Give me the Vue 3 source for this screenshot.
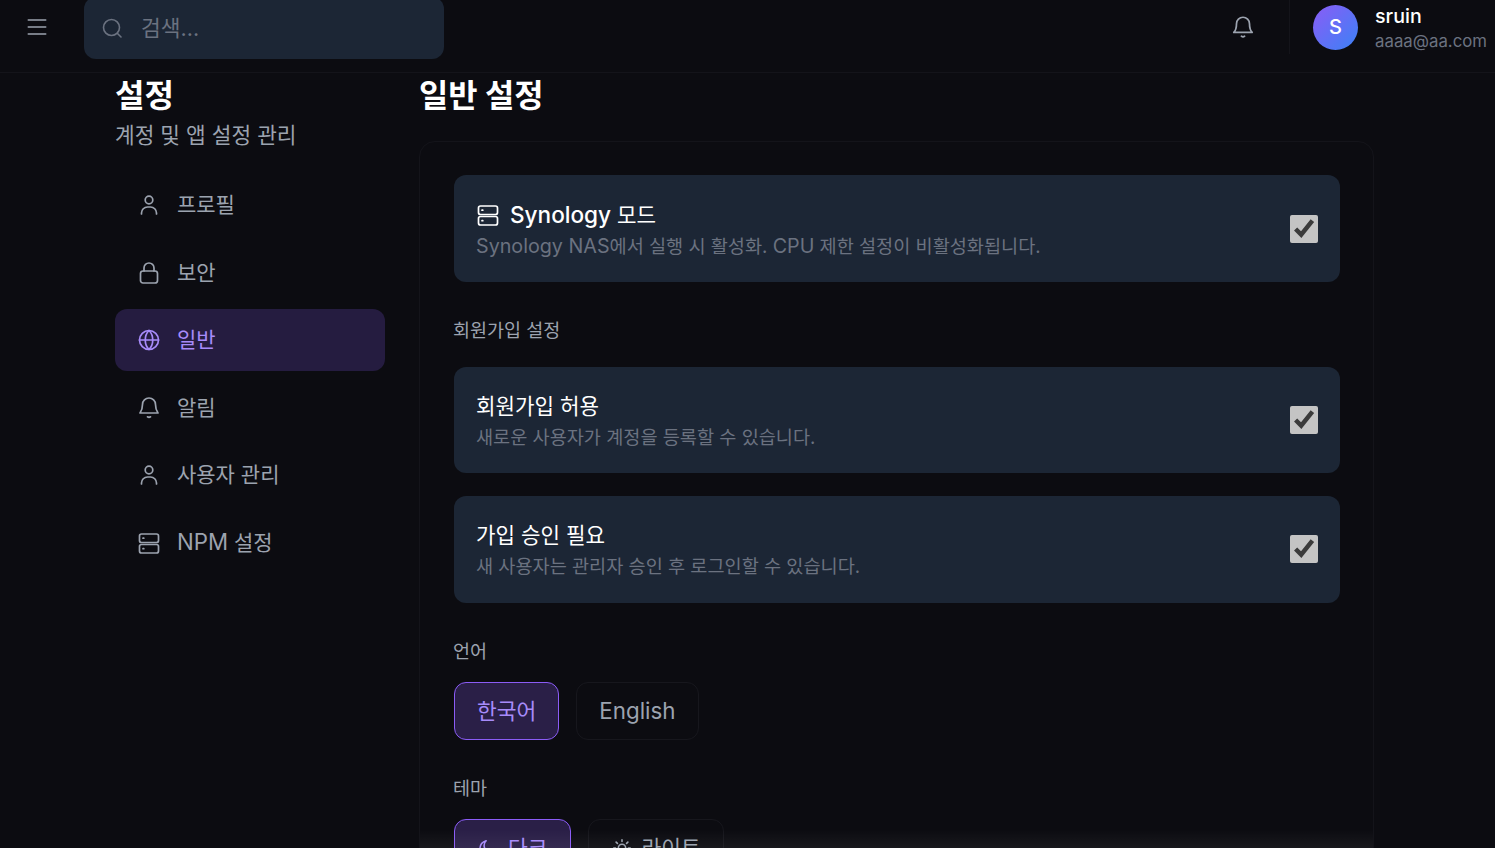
<script setup>
const navItems = [
  { label: '프로필', icon: 'user' },
  { label: '보안', icon: 'lock' },
  { label: '일반', icon: 'globe', active: true },
  { label: '알림', icon: 'bell' },
  { label: '사용자 관리', icon: 'user' },
  { label: '설정', latin: 'NPM', icon: 'server' }
]

const signupRows = [
  { title: '회원가입 허용', desc: '새로운 사용자가 계정을 등록할 수 있습니다.' },
  { title: '가입 승인 필요', desc: '새 사용자는 관리자 승인 후 로그인할 수 있습니다.' }
]
</script>

<template>
  <div class="page">
    <header class="topbar">
      <button class="menu-btn" aria-label="menu">
        <svg width="24" height="24" viewBox="0 0 24 24" fill="none" stroke="currentColor" stroke-width="1.6" stroke-linecap="round"><path d="M3.3 6h17.400M3.3 13h17.400M3.3 20h17.400" /></svg>
      </button>
      <div class="search">
        <svg width="24" height="24" viewBox="0 0 24 24" fill="none" stroke="currentColor" stroke-width="1.6" stroke-linecap="round"><circle cx="11.500" cy="11.500" r="8" /><path d="m17.500 17.500 3.500 3.500" /></svg>
        <span>검색...</span>
      </div>
      <div class="spacer"></div>
      <svg class="top-bell" width="26" height="26" viewBox="0 0 24 24" fill="none" stroke="currentColor" stroke-width="1.6" stroke-linecap="round" stroke-linejoin="round"><path d="M6 9a6 6 0 0 1 12 0c0 5 1.500 7 2.500 8h-17C4.500 16 6 14 6 9Z" /><path d="M10.500 20.500c.8.700 2.200.700 3 0" /></svg>
      <div class="user">
        <div class="avatar">S</div>
        <div class="user-text">
          <div class="user-name">sruin</div>
          <div class="user-mail">aaaa@aa.com</div>
        </div>
      </div>
    </header>

    <div class="content">
      <aside class="sidebar">
        <h1>설정</h1>
        <p class="sub">계정 및 앱 설정 관리</p>
        <nav>
          <a v-for="item in navItems" :key="item.label" class="nav-item" :class="{ active: item.active }">
            <svg width="24" height="24" viewBox="0 0 24 24" fill="none" stroke="currentColor" stroke-width="1.7" stroke-linecap="round" stroke-linejoin="round">
              <template v-if="item.icon === 'user'">
                <circle cx="12" cy="7" r="3.800" /><path d="M4.500 21v-1a6 6 0 0 1 6-6h3a6 6 0 0 1 6 6v1" />
              </template>
              <template v-else-if="item.icon === 'lock'">
                <rect x="3.500" y="10" width="17" height="12" rx="2.500" /><path d="M7 10V7a5 5 0 0 1 10 0v3" />
              </template>
              <template v-else-if="item.icon === 'globe'">
                <circle cx="12" cy="12" r="9.500" /><path d="M2.500 12h19M12 2.500c5 5 5 14 0 19M12 2.500c-5 5-5 14 0 19" />
              </template>
              <template v-else-if="item.icon === 'bell'">
                <path d="M5.500 8.500a6.500 6.500 0 0 1 13 0c0 5 1.500 7 2.500 8.500H3c1-1.500 2.500-3.500 2.500-8.500Z" /><path d="M10.500 20.800c.8.600 2.200.600 3 0" />
              </template>
              <template v-else>
                <rect x="2.500" y="3" width="19" height="8.500" rx="2" /><rect x="2.500" y="13.500" width="19" height="8.500" rx="2" /><path d="M6 7.200h.8M6 17.700h.8" />
              </template>
            </svg>
            <span class="nav-label"><template v-if="item.latin"><span class="lat">{{ item.latin }}</span>&nbsp;</template>{{ item.label }}</span>
          </a>
        </nav>
      </aside>

      <main class="main">
        <h2>일반 설정</h2>
        <section class="card">
          <div class="row first">
            <div class="row-text">
              <div class="row-title">
                <svg width="24" height="24" viewBox="0 0 24 24" fill="none" stroke="currentColor" stroke-width="1.7" stroke-linecap="round" stroke-linejoin="round"><rect x="2.500" y="3" width="19" height="8.500" rx="2" /><rect x="2.500" y="13.500" width="19" height="8.500" rx="2" /><path d="M6 7.200h.8M6 17.700h.8" /></svg>
                <span><span class="lat strong">Synology</span> 모드</span>
              </div>
              <div class="row-desc"><span class="lat">Synology NAS</span>에서 실행 시 활성화. <span class="lat">CPU</span> 제한 설정이 비활성화됩니다.</div>
            </div>
            <input type="checkbox" checked />
          </div>

          <div class="group-label">회원가입 설정</div>
          <div class="rows">
            <div v-for="row in signupRows" :key="row.title" class="row">
              <div class="row-text">
                <div class="row-title">{{ row.title }}</div>
                <div class="row-desc">{{ row.desc }}</div>
              </div>
              <input type="checkbox" checked />
            </div>
          </div>

          <div class="group-label">언어</div>
          <div class="options">
            <button class="option selected"><span>한국어</span></button>
            <button class="option"><span class="lat">English</span></button>
          </div>

          <div class="group-label">테마</div>
          <div class="options">
            <button class="option selected">
              <svg width="22" height="22" viewBox="0 0 24 24" fill="none" stroke="currentColor" stroke-width="1.700" stroke-linecap="round" stroke-linejoin="round"><path d="M20 14.500A8.500 8.500 0 1 1 10 4a7 7 0 0 0 10 10.500Z" /></svg>
              <span>다크</span>
            </button>
            <button class="option">
              <svg width="22" height="22" viewBox="0 0 24 24" fill="none" stroke="currentColor" stroke-width="1.700" stroke-linecap="round"><circle cx="12" cy="12" r="4" /><path d="M12 3v2M12 19v2M3 12h2M19 12h2M5.600 5.600l1.400 1.400M17 17l1.400 1.400M5.600 18.400 7 17M17 7l1.400-1.400" /></svg>
              <span>라이트</span>
            </button>
          </div>
          <div class="card-fade"></div>
        </section>
      </main>
    </div>
  </div>
</template>

<style>
html, body {
  margin: 0;
  background: #0c0c11;
  overflow: hidden;
}
</style>

<style scoped>
.page {
  position: relative;
  height: 848px;
  overflow: hidden;
  background: #0c0c11;
  color: #fff;
  font-family: Inter, "Noto Sans CJK KR", sans-serif;
}

.lat {
  font-size: 1.06em;
}

.lat.strong {
  font-size: 1.065em;
  font-weight: 450;
}

.topbar {
  height: 72px;
  display: flex;
  align-items: flex-start;
  border-bottom: 1px solid #14141a;
  padding: 0 8px 0 25px;
}

.menu-btn {
  background: none;
  border: 0;
  padding: 0;
  margin: 14px 35px 0 0;
  color: #9ca3af;
  width: 24px;
  height: 24px;
}

.search {
  width: 360px;
  height: 62px;
  margin-top: -3px;
  box-sizing: border-box;
  display: flex;
  align-items: center;
  gap: 17px;
  padding: 0 16px;
  background: #1c2635;
  border-radius: 12px;
  color: #6b7280;
  font-size: 21.500px;
}

.search span {
  padding-bottom: 4px;
}

.spacer {
  flex: 1;
}

.top-bell {
  color: #9ca3af;
  margin: 14px 33px 0 0;
}

.user {
  display: flex;
  align-items: center;
  gap: 17px;
  height: 54px;
  padding-left: 23px;
  border-left: 1px solid #14141a;
}

.avatar {
  width: 45px;
  height: 45px;
  border-radius: 50%;
  background: linear-gradient(135deg, #8b5cf6, #3b82f6);
  display: flex;
  align-items: center;
  justify-content: center;
  font-size: 20px;
  font-weight: 500;
}

.user-name {
  font-size: 19.600px;
  line-height: 26px;
  font-weight: 500;
  margin-top: 1px;
}

.user-mail {
  font-size: 16.800px;
  line-height: 24px;
  color: #6b7280;
}

.content {
  display: flex;
  gap: 34px;
  padding-left: 115px;
}

.sidebar {
  width: 270px;
  flex: none;
}

h1 {
  margin: 0;
  font-size: 32px;
  line-height: 46px;
  font-weight: 700;
}

.sub {
  margin: 0;
  font-size: 21.400px;
  line-height: 32px;
  color: #9ca3af;
}

nav {
  display: flex;
  flex-direction: column;
  gap: 5.500px;
  margin-top: 23px;
}

.nav-item {
  height: 62px;
  display: flex;
  align-items: center;
  gap: 15.600px;
  padding: 0 22.400px;
  border-radius: 12px;
  color: #9ca3af;
  font-size: 21px;
}

.nav-label {
  padding-bottom: 4px;
}

.nav-item.active {
  background: #251c40;
  color: #a78bfa;
}

.main {
  width: 955px;
  flex: none;
}

h2 {
  margin: 0;
  font-size: 31.800px;
  line-height: 46px;
  font-weight: 700;
}

.card {
  position: relative;
  height: 800px;
  box-sizing: border-box;
  margin-top: 22px;
  padding: 33px 33px 33px 34px;
  border: 1px solid #14141a;
  border-radius: 16px;
}

.rows {
  display: flex;
  flex-direction: column;
  gap: 23px;
}

.row {
  display: flex;
  align-items: center;
  justify-content: space-between;
  box-sizing: border-box;
  height: 106.500px;
  padding: 0 22px;
  background: #1c2635;
  border-radius: 12px;
}

.row.first {
  height: 107px;
  margin-bottom: -0.500px;
}

.row-text {
  padding-top: 1px;
}

.row.first .row-text {
  padding-top: 2px;
}

.row-title {
  display: flex;
  align-items: center;
  gap: 10px;
  font-size: 21.200px;
  line-height: 32px;
  font-weight: 400;
}

.row-desc {
  margin-top: 1px;
  font-size: 18.600px;
  line-height: 28px;
  color: #6b7280;
}

input[type="checkbox"] {
  width: 28px;
  height: 28px;
  margin: 0;
  flex: none;
  accent-color: #c4c4c4;
}

.group-label {
  margin: 34px 0 23px -1px;
  font-size: 18.500px;
  line-height: 28px;
  color: #9ca3af;
}

.options {
  display: flex;
  gap: 17px;
  margin-top: -6px;
}

.option {
  height: 58px;
  display: flex;
  align-items: center;
  gap: 9px;
  padding: 0 22px;
  box-sizing: border-box;
  background: none;
  border: 1px solid #17171d;
  border-radius: 12px;
  color: #9ca3af;
  font: inherit;
  font-size: 21.500px;
}

.option span {
  padding-bottom: 3px;
}

.option .lat {
  font-size: 1.040em;
  padding-bottom: 1px;
}

.option.selected {
  background: #2a1f47;
  border-color: #8b5cf6;
  color: #a78bfa;
}

.card-fade {
  position: absolute;
  left: 0;
  right: 0;
  top: 688px;
  height: 18px;
  background: linear-gradient(to bottom, rgba(255, 255, 255, 0), rgba(255, 255, 255, 0.05));
  pointer-events: none;
}
</style>
